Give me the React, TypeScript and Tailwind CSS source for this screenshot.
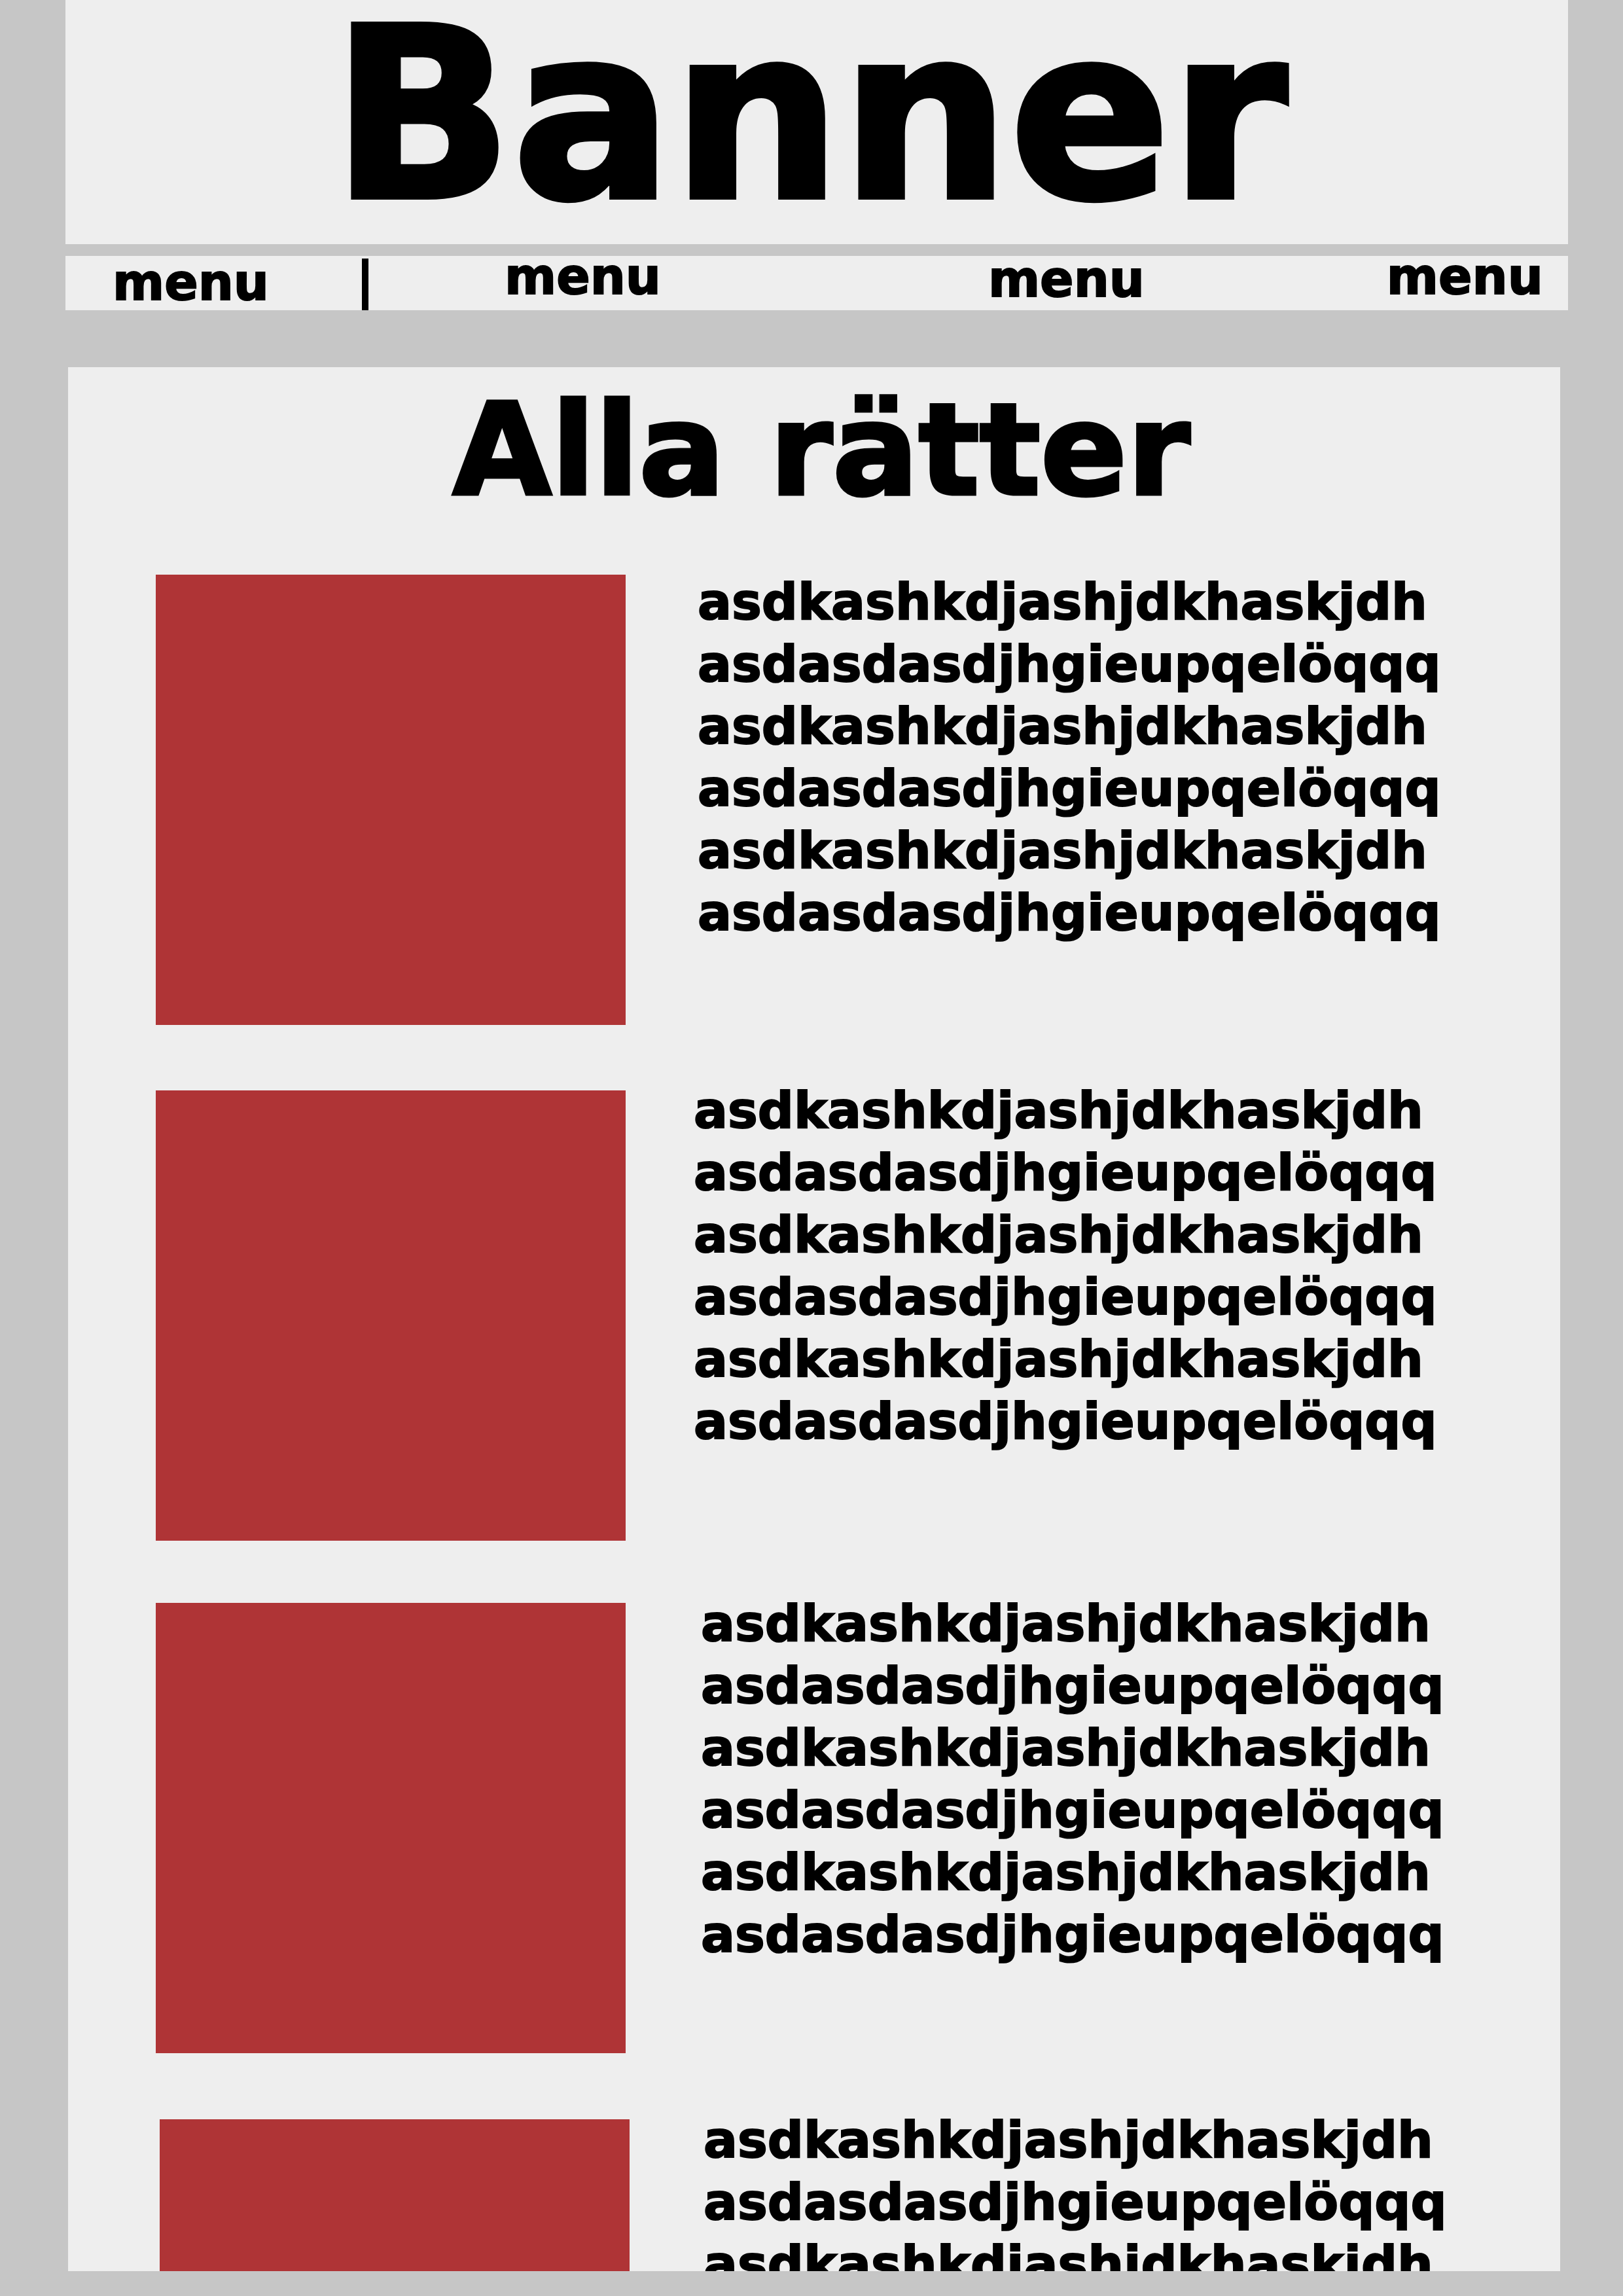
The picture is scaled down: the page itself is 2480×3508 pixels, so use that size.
const lines = [
  "asdkashkdjashjdkhaskjdh",
  "asdasdasdjhgieupqelöqqq",
  "asdkashkdjashjdkhaskjdh",
  "asdasdasdjhgieupqelöqqq",
  "asdkashkdjashjdkhaskjdh",
  "asdasdasdjhgieupqelöqqq",
];

const rows = [
  { row: "mt-[90px]", box: "ml-[134px]", text: "ml-[110px] -mt-[6px]" },
  { row: "mt-[100px]", box: "ml-[134px]", text: "ml-[104px] -mt-[17px]" },
  { row: "mt-[95px]", box: "ml-[134px]", text: "ml-[115px] -mt-[16px]" },
  { row: "mt-[101px]", box: "ml-[140px]", text: "ml-[113px] -mt-[16px]" },
];

function Dish({ row, box, text }: { row: string; box: string; text: string }) {
  return (
    <div className={`flex items-start shrink-0 ${row}`}>
      <div className={`w-[718px] h-[688px] shrink-0 bg-[#af3436] ${box}`} />
      <div
        className={`flex flex-col text-[77px] leading-[95px] whitespace-nowrap [-webkit-text-stroke:2px_black] ${text}`}
      >
        {lines.map((line, i) => (
          <span key={i}>{line}</span>
        ))}
      </div>
    </div>
  );
}

export default function App() {
  return (
    <div className="w-[2480px] h-[3508px] overflow-hidden bg-[#c6c6c6] font-['DejaVu_Sans',sans-serif] font-bold text-black">
      {/* Header */}
      <header className="ml-[100px] w-[2296px]">
        <div className="h-[373px] bg-[#eeeeee] flex justify-center items-start">
          <h1 className="pt-[26px] pr-[22px] text-[362px] leading-[300px] font-bold [-webkit-text-stroke:8px_black]">
            Banner
          </h1>
        </div>

        <nav className="mt-[18px] h-[83px] bg-[#eeeeee] flex items-start text-[76px] leading-[60px] [-webkit-text-stroke:2px_black]">
          <span className="ml-[72px] pt-[11px]">menu</span>
          <span className="ml-[142px] mt-[4px] w-[10px] h-[79px] bg-black" />
          <span className="ml-[208px] pt-[2px]">menu</span>
          <span className="ml-[500px] pt-[6px]">menu</span>
          <span className="ml-[370px] pt-[2px]">menu</span>
        </nav>
      </header>

      {/* Content */}
      <main className="mt-[87px] ml-[104px] w-[2280px] h-[2909px] overflow-hidden bg-[#eeeeee] flex flex-col">
        <h2 className="pt-[27px] pl-[22px] text-center text-[195px] leading-[200px] font-bold shrink-0 [-webkit-text-stroke:5px_black]">
          Alla rätter
        </h2>
        {rows.map((r, i) => (
          <Dish key={i} {...r} />
        ))}
      </main>
    </div>
  );
}
